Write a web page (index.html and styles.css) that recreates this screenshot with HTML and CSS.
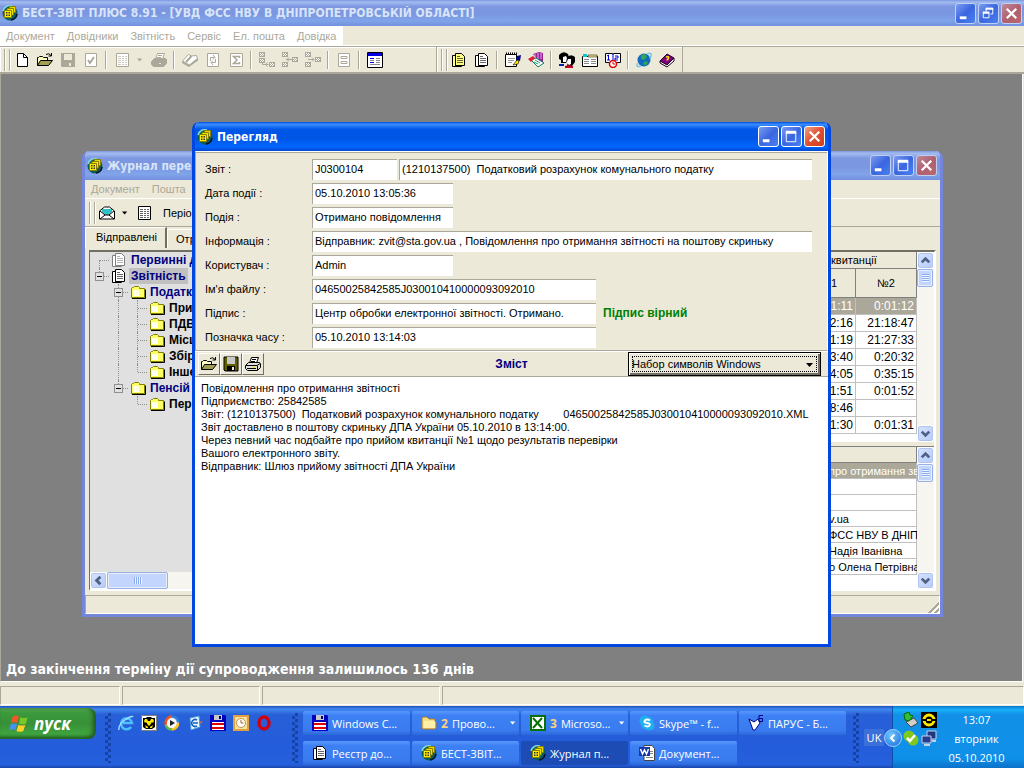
FILE: index.html
```html
<!DOCTYPE html>
<html lang="uk">
<head>
    <meta charset="UTF-8">
    <title>БЕСТ-ЗВІТ ПЛЮС 8.91</title>
    <link rel="stylesheet" href="styles.css">
</head>
<body>
<!-- icon set -->
<svg class="sprite" aria-hidden="true">
    <symbol id="app" viewBox="0 0 16 16">
        <circle cx="8" cy="8" r="7.5" fill="#0c5a5a"/>
        <path d="M1 6a7 7 0 0 1 9-5" fill="none" stroke="#7fd8d8" stroke-width="1.5"/>
        <path d="M7.500 1.500h6v6h-6z" fill="#e8d800" stroke="#8a8000"/>
        <path d="M5 3.500h6.500v6.500h-6.500z" fill="#f4e800" stroke="#8a8000"/>
        <path d="M2.500 5.500h7v7h-7z" fill="#ffee00" stroke="#8a8000"/>
        <path d="M4 7h1.500v1.500h-1.500zM6.500 7h1.500v1.500h-1.500zM4 9.500h1.500v1.500h-1.500zM6.500 9.500h1.500v1.500h-1.500z" fill="#333"/>
        <path d="M15 9a7 7 0 0 1-6 6" fill="none" stroke="#012" stroke-width="1.500"/>
    </symbol>
    <symbol id="new" viewBox="0 0 16 16">
        <path d="M3.500 1.500h6l4 4v9h-10z" fill="#fff" stroke="#000"/>
        <path d="M9.500 1.500v4h4" fill="none" stroke="#000"/>
    </symbol>
    <symbol id="open" viewBox="0 0 16 16">
        <path d="M.5 13.500v-8h1l1-1h3l1 1h4v3" fill="#ffffc0" stroke="#000"/>
        <path d="M.5 13.500l3-5h12l-4 5z" fill="#a0a050" stroke="#000"/>
        <path d="M9 2.500q3-2 5 1M14.500 1v3h-3" fill="none" stroke="#000"/>
    </symbol>
    <symbol id="save" viewBox="0 0 16 16">
        <path d="M1 1h14v14h-13l-1-1z" fill="#606000" stroke="#000"/>
        <path d="M4 1h8v7h-8z" fill="#c8c8c8"/>
        <path d="M4 10h8v5h-8z" fill="#000"/>
        <path d="M9 11h2v3h-2z" fill="#ece9d8"/>
    </symbol>
    <symbol id="save-off" viewBox="0 0 16 16">
        <path d="M1 1h14v14h-13l-1-1z" fill="#aca899"/>
        <path d="M4 2h8v6h-8zM9 11h2v3h-2z" fill="#ece9d8"/>
    </symbol>
    <symbol id="check" viewBox="0 0 16 16">
        <path d="M2.500 1.500h11v13h-11z" fill="#fff" stroke="#aca899"/>
        <path d="M5 8l2 3 4-6" fill="none" stroke="#aca899" stroke-width="2"/>
    </symbol>
    <symbol id="list" viewBox="0 0 16 16">
        <path d="M2.500 1.500h12v13h-12z" fill="#fff" stroke="currentColor"/>
        <path d="M4 4.500h3M8 4.500h2M11 4.500h2M4 6.500h3M8 6.500h2M11 6.500h2M4 8.500h3M8 8.500h2M11 8.500h2M4 10.500h3M8 10.500h2M11 10.500h2M4 12.500h3M8 12.500h2M11 12.500h2" stroke="currentColor" opacity=".6"/>
    </symbol>
    <symbol id="print" viewBox="0 0 16 16">
        <path d="M4.500 7l2-5.500h7l-2 5.500z" fill="#fff" stroke="currentColor"/>
        <path d="M7 3.500h4M6 5.500h4" stroke="currentColor"/>
        <path d="M.5 9.500l3-3h11l1 1v4l-3 3h-10l-2-2z" fill="var(--case)" stroke="currentColor"/>
        <path d="M1 9.500h11l3-2M12.500 10v4M2 12.500h9" fill="none" stroke="currentColor"/>
        <path d="M8 11h2v1h-2z" fill="var(--lamp)"/>
    </symbol>
    <symbol id="openbook" viewBox="0 0 16 16">
        <path d="M.5 9l6-6.500 3 1.500 5-.5 1 3-8 6.500z" fill="#fff" stroke="#aca899"/>
        <path d="M0 9l7 4 9-7v2.500l-9 6.500-7-4z" fill="#aca899"/>
        <path d="M9.500 4l-5.500 6" stroke="#aca899" stroke-width="2"/>
    </symbol>
    <symbol id="refresh" viewBox="0 0 16 16">
        <path d="M2.500 1.500h11v13h-11z" fill="#fff" stroke="#aca899"/>
        <path d="M5.500 9v-3.500h4M10.500 7v3.500h-4M8 3l2 2.500-2 2M8 8.500l-2 2 2 2.500" fill="none" stroke="#aca899"/>
    </symbol>
    <symbol id="sigma" viewBox="0 0 16 16">
        <path d="M2.500 1.500h12v13h-12z" fill="#fff" stroke="#aca899"/>
        <path d="M11.500 6v-1.500h-6l3.500 3.500-3.500 3.500h6v-1.500" fill="none" stroke="#aca899" stroke-width="1.500"/>
    </symbol>
    <symbol id="node-a" viewBox="0 0 16 16">
        <path d="M0 0h6v5h-6zM0 6h6v5h-6zM10 10h6v5h-6z" fill="#aca899"/>
        <path d="M1 1h1v1h-1zM3 1h1v1h-1zM2 2h1v1h-1zM4 2h1v1h-1zM1 3h1v1h-1zM3 3h1v1h-1zM1 7h1v1h-1zM3 7h1v1h-1zM2 8h1v1h-1zM4 8h1v1h-1zM1 9h1v1h-1zM3 9h1v1h-1zM11 11h1v1h-1zM13 11h1v1h-1zM12 12h1v1h-1zM14 12h1v1h-1zM11 13h1v1h-1zM13 13h1v1h-1z" fill="#fff"/>
        <path d="M3.500 11v1.500h6M8.500 10.500l-2 2 2 2" fill="none" stroke="#aca899"/>
    </symbol>
    <symbol id="node-b" viewBox="0 0 16 16">
        <path d="M0 0h6v5h-6zM0 10h6v5h-6zM10 5h6v5h-6z" fill="#aca899"/>
        <path d="M1 1h1v1h-1zM3 1h1v1h-1zM2 2h1v1h-1zM4 2h1v1h-1zM1 3h1v1h-1zM3 3h1v1h-1zM1 11h1v1h-1zM3 11h1v1h-1zM2 12h1v1h-1zM4 12h1v1h-1zM1 13h1v1h-1zM3 13h1v1h-1zM11 6h1v1h-1zM13 6h1v1h-1zM12 7h1v1h-1zM14 7h1v1h-1zM11 8h1v1h-1zM13 8h1v1h-1z" fill="#fff"/>
        <path d="M4 7.500h6M7 5.500l-2 2 2 2" fill="none" stroke="#aca899"/>
    </symbol>
    <symbol id="node-c" viewBox="0 0 16 16">
        <path d="M0 0h6v5h-6zM0 10h6v5h-6zM10 5h6v5h-6z" fill="#aca899"/>
        <path d="M1 1h1v1h-1zM3 1h1v1h-1zM2 2h1v1h-1zM4 2h1v1h-1zM1 3h1v1h-1zM3 3h1v1h-1zM1 11h1v1h-1zM3 11h1v1h-1zM2 12h1v1h-1zM4 12h1v1h-1zM1 13h1v1h-1zM3 13h1v1h-1zM11 6h1v1h-1zM13 6h1v1h-1zM12 7h1v1h-1zM14 7h1v1h-1zM11 8h1v1h-1zM13 8h1v1h-1z" fill="#fff"/>
        <path d="M3 7.500h6M7 5.500l2 2-2 2" fill="none" stroke="#aca899"/>
    </symbol>
    <symbol id="pane" viewBox="0 0 16 16">
        <path d="M2.500 1.500h11v13h-11z" fill="#fff" stroke="#aca899"/>
        <path d="M5 4.500h6v2h-6zM5 9.500h6v2h-6z" fill="#fff" stroke="#aca899"/>
    </symbol>
    <symbol id="form" viewBox="0 0 16 16">
        <path d="M.5.5h15v15h-15z" fill="#fff" stroke="#000"/>
        <path d="M1 1h14v3h-14z" fill="#0000e0"/>
        <path d="M3 6.500h4M3 10.500h4" stroke="#0000e0"/>
        <path d="M9 6.500h4M9 8.500h4M9 10.500h4M3 8.500h4M3 12.500h10" stroke="#888"/>
    </symbol>
    <symbol id="docs" viewBox="0 0 16 16">
        <path d="M1.500 3.500h3v10h6v1h-9z" fill="var(--body)" stroke="currentColor"/>
        <path d="M4.500 1.500h6l3 3v9h-9z" fill="var(--body)" stroke="currentColor"/>
        <path d="M6 4.500h3M6 6.500h6M6 8.500h6M6 10.500h6" stroke="currentColor" opacity=".6"/>
    </symbol>
    <symbol id="notepad" viewBox="0 0 16 16">
        <path d="M.5 2.500h11v12h-11z" fill="#fff" stroke="#000"/>
        <path d="M1 1.500h11" stroke="#000" stroke-width="2" stroke-dasharray="1 1"/>
        <path d="M3 6.500h7M3 8.500h6M3 10.500h4" stroke="#999"/>
        <path d="M12 4l4-1-1 6-4-1z" fill="#000080"/>
        <path d="M12 8l-4 5 5-1 1-3z" fill="#ffe800" stroke="#000" stroke-width=".6"/>
    </symbol>
    <symbol id="books" viewBox="0 0 16 16">
        <path d="M5 2l6-2 4 1v10l-7-5z" fill="#a02090"/>
        <path d="M7 2v4M10 1v6M13 1v6" stroke="#d8b0ff"/>
        <path d="M3 8l5-2 8 5-6 4z" fill="#fff" stroke="#088060"/>
        <path d="M0 7l5-3 2 2-4 4z" fill="#e02030"/>
        <path d="M6 10l4 2M7 8l5 3" stroke="#18a078"/>
    </symbol>
    <symbol id="people" viewBox="0 0 16 16">
        <path d="M0 3q4-5 9-1l1 3-3 6h-5v-3l-2-1z" fill="#000"/>
        <path d="M4 5l3-1 1 2-1 4h-3z" fill="#fff"/>
        <path d="M8 6q3-5 8-1v5l-3 4h-5l1-4z" fill="#000"/>
        <path d="M9 7h3v5l-2 1-2-2z" fill="#fff"/>
        <path d="M6 14l4-1 4 1v2h-8z" fill="#c00020"/>
        <path d="M0 12h5v2h-5z" fill="#0020b0"/>
    </symbol>
    <symbol id="cards" viewBox="0 0 16 16">
        <path d="M.5 4.500h15v10h-15z" fill="#fff" stroke="#000"/>
        <path d="M1 2h4v3h-4z" fill="#00c8d8"/>
        <path d="M6 3h9v2h-9z" fill="#f0e080" stroke="#000" stroke-width=".5"/>
        <path d="M2 7.500h5M2 9.500h5M2 11.500h5M9 7.500h5M9 9.500h5M9 11.500h5" stroke="#888"/>
    </symbol>
    <symbol id="diary" viewBox="0 0 16 16">
        <path d="M.5 1.500h7l.5 1 .5-1h7v9h-15z" fill="#fff" stroke="#000"/>
        <path d="M2 4l1.500-1v5M2 8h3M10 4h3v2h-3v2h3M8 2v7" fill="none" stroke="#0000e0"/>
        <circle cx="8" cy="12" r="3.500" fill="#fff" stroke="#e00000" stroke-width="1.500"/>
        <path d="M8 10v2h2" fill="none" stroke="#e00000"/>
    </symbol>
    <symbol id="globe" viewBox="0 0 16 16">
        <circle cx="8" cy="8" r="6.500" fill="#1468c0"/>
        <path d="M5 3l4-1 2 3-3 3-3-1zM9 9l3 1-2 4-3-2z" fill="#30a850"/>
        <path d="M2 11q-3 5 3 3M11 2q5-2 4 2l-1 3" fill="none" stroke="#70c8f0" stroke-width="1.500"/>
    </symbol>
    <symbol id="help" viewBox="0 0 16 16">
        <path d="M1 9l7-7 7 4-7 7z" fill="#800080" stroke="#200020"/>
        <path d="M1 9l7 4 7-7v3l-7 6-7-4z" fill="#fff" stroke="#200020"/>
        <path d="M7 5q3-1 2.500 1t-2 2" fill="none" stroke="#ffe800" stroke-width="1.500"/>
    </symbol>
    <symbol id="mail" viewBox="0 0 16 16">
        <path d="M.5 6l5-4h5l5 4v8h-15z" fill="#fff" stroke="#000"/>
        <path d="M3 4h10v3l-4 3h-2l-4-3z" fill="#30c0c8"/>
        <path d="M1 6l5 4-5 4M15 6l-5 4 5 4M6 10h4" fill="none" stroke="#000"/>
    </symbol>
    <symbol id="folder" viewBox="0 0 16 16">
        <path d="M1.500 13.500v-9l1-1h1l1-1h4l1 1v1h5v9z" fill="#ffff66" stroke="#808000"/>
        <path d="M3 6h6v6h-6z" fill="#fffff0"/>
        <path d="M2 14.500h13.500v-9" fill="none" stroke="#000"/>
    </symbol>
    <symbol id="folder-xp" viewBox="0 0 16 16">
        <path d="M1 13v-10l1-1h4l2 2h6v2l1 1v6l-1 1h-12z" fill="#f8e08a" stroke="#a8782a"/>
        <path d="M3 6h11v7h-11z" fill="#fff0a8"/>
    </symbol>
    <symbol id="floppy" viewBox="0 0 16 16">
        <path d="M0 0h15l1 1v15h-16z" fill="#0000c0"/>
        <path d="M4 0h8v5h-8z" fill="#c8c8c8"/><path d="M9 1h2v3h-2z" fill="#000080"/>
        <path d="M2 7h12v8h-12z" fill="#fff"/><path d="M2 8h12v2h-12zM2 12h12v2h-12z" fill="#e00000"/>
    </symbol>
    <symbol id="ie" viewBox="0 0 16 16">
        <path d="M13 12a5.500 5.500 0 1 1 1-4h-9" fill="none" stroke="#4cc0ff" stroke-width="2.500"/>
        <path d="M1 15q-1-5 6-10t8-3" fill="none" stroke="#9ce0ff" stroke-width="1.500"/>
    </symbol>
    <symbol id="bat" viewBox="0 0 16 16">
        <path d="M0 0h16v16h-16z" fill="#fff"/>
        <path d="M.5.5h15v15h-15z" fill="none" stroke="#000" stroke-dasharray="1 1"/>
        <path d="M2 3h3l1-1h4l1 1h3v9l-3 2h-6l-3-2z" fill="#000"/>
        <path d="M4 4h2l1 2h2l1-2h2l1 2-1 2-1-1-2 3-1 1-1-1-2-3-1 1-1-2zM4 10l3 2v1h-2zM12 10l-3 2v1h2z" fill="#ffe800"/>
    </symbol>
    <symbol id="player" viewBox="0 0 16 16">
        <circle cx="8" cy="8" r="7" fill="#f8f8f8"/>
        <path d="M2 10a6.500 6.500 0 0 1 6-8.500" fill="none" stroke="#f05020" stroke-width="2.500"/>
        <path d="M8 1.500a6.500 6.500 0 0 1 6 6" fill="none" stroke="#3080e0" stroke-width="2.500"/>
        <path d="M14 8a6.500 6.500 0 0 1-6 6.500" fill="none" stroke="#ffc020" stroke-width="2.500"/>
        <path d="M8 14.500a6.500 6.500 0 0 1-6-4" fill="none" stroke="#60b840" stroke-width="2.500"/>
        <path d="M6 5l5 3-5 3z" fill="#222"/>
    </symbol>
    <symbol id="outlook" viewBox="0 0 16 16">
        <path d="M3 3l9-2 1 11-9 3z" fill="#e8f4ff" stroke="#4898e0"/>
        <path d="M10 5a3.500 3.500 0 1 0 0 6M6 8h5" fill="none" stroke="#1060c0" stroke-width="1.500"/>
        <path d="M12 5l2 2 2-1-2 3z" fill="#e07020"/>
    </symbol>
    <symbol id="clock" viewBox="0 0 16 16">
        <path d="M1 1h14v14h-14z" fill="#f8e0a0" stroke="#e0a040" stroke-width="2"/>
        <circle cx="8" cy="8" r="4.500" fill="#fff" stroke="#c89040"/>
        <path d="M8 5v3h2.500" fill="none" stroke="#a86820"/>
    </symbol>
    <symbol id="opera" viewBox="0 0 16 16">
        <ellipse cx="8" cy="8" rx="5" ry="6" fill="none" stroke="#d00010" stroke-width="3.500"/>
    </symbol>
    <symbol id="excel" viewBox="0 0 16 16">
        <path d="M0 0h16v16h-16z" fill="#087008"/>
        <path d="M2 2h12v12h-12z" fill="#fff"/>
        <path d="M3 3l9 10M12 3l-9 10" stroke="#087008" stroke-width="2"/>
    </symbol>
    <symbol id="skype" viewBox="0 0 16 16">
        <circle cx="5.500" cy="5.500" r="5" fill="#20b0f0"/><circle cx="10.500" cy="10.500" r="5" fill="#20b0f0"/>
        <circle cx="8" cy="8" r="6.500" fill="#20b0f0"/>
        <path d="M11 5.500q-3-2-5 0t2 2.500 2.500 2.500-5 0" fill="none" stroke="#fff" stroke-width="2"/>
    </symbol>
    <symbol id="parus" viewBox="0 0 16 16">
        <path d="M1 4l5 3 4-3 2 4-5 7h-2z" fill="#fff" stroke="#000080"/>
        <path d="M15 .5h-4v6h3.500v-3h-3.500" fill="none" stroke="#000080"/>
    </symbol>
    <symbol id="word" viewBox="0 0 16 16">
        <path d="M5 .5h8l2.500 3v12h-10.500z" fill="#fff" stroke="#444"/>
        <path d="M10 6.500h4M10 8.500h4M7 12.500h7" stroke="#888"/>
        <path d="M0 2h11v9h-11z" fill="#1838a8"/>
        <path d="M1.500 4l2 5 2-4 2 4 2-5" fill="none" stroke="#fff" stroke-width="1.500"/>
    </symbol>
    <symbol id="usb" viewBox="0 0 16 16">
        <path d="M3 10l8-4 4 5-7 4z" fill="#d0d0c8" stroke="#444"/>
        <path d="M1 2l5-2 1 3 3 1-4 5-4-1z" fill="#30c030" stroke="#086808"/>
    </symbol>
    <symbol id="agent" viewBox="0 0 16 16">
        <path d="M0 0h16v16h-16z" fill="#000"/>
        <circle cx="8" cy="8" r="5" fill="none" stroke="#ffe800" stroke-width="3"/>
        <path d="M0 7h5l3-1 3 1h5v2h-5l-3 2-3-2h-5z" fill="#000"/><path d="M6 8h4" stroke="#ffe800" stroke-width="2"/>
    </symbol>
    <symbol id="online" viewBox="0 0 16 16">
        <circle cx="6" cy="6" r="5.500" fill="#80c820"/><circle cx="10" cy="10" r="5.500" fill="#80c820"/>
        <path d="M4 8l3 3 5-6" fill="none" stroke="#fff" stroke-width="2.500"/>
    </symbol>
    <symbol id="net" viewBox="0 0 16 16">
        <path d="M6 1h9v8h-9z" fill="#203880" stroke="#c8d0e8"/><path d="M1 6h9v7h-9z" fill="#283c90" stroke="#c8d0e8"/>
        <path d="M3 15h6M11 11h4" stroke="#c8d0e8" stroke-width="2"/>
    </symbol>
    <symbol id="flag" viewBox="0 0 16 16">
        <path d="M3 2q2-1.500 5 0l-1.500 5q-2.500-1-5 0z" fill="#f05828"/>
        <path d="M9 2.500q3 1.500 6 0l-1.500 5q-3 1.500-5.500 0z" fill="#78c828"/>
        <path d="M1.500 8q2.500-1 5 0l-1.500 5q-2-1.500-5 0z" fill="#4890f0"/>
        <path d="M7.500 8.500q3 1.500 5.500 0l-1.500 5q-3 1.500-5.500 0z" fill="#ffd028"/>
    </symbol>
    <symbol id="min" viewBox="0 0 20 20"><path d="M4 13h7v3h-7z" fill="#fff"/></symbol>
    <symbol id="max" viewBox="0 0 20 20">
        <path d="M4.500 5.500h10v10h-10z" fill="none" stroke="#fff"/><path d="M4 4h11v3h-11z" fill="#fff"/>
    </symbol>
    <symbol id="restore" viewBox="0 0 20 20">
        <path d="M7.500 8v-3.500h7v6h-2.500M4.500 9.500h6v5h-6z" fill="none" stroke="#fff"/><path d="M7 4h8v2h-8zM4 8h7v2h-7z" fill="#fff"/>
    </symbol>
    <symbol id="close" viewBox="0 0 20 20"><path d="M5 5l10 10M15 5l-10 10" stroke="#fff" stroke-width="2.500"/></symbol>
    <symbol id="up" viewBox="0 0 16 16"><path d="M4 10l4-4 4 4" fill="none" stroke="#4d6185" stroke-width="3"/></symbol>
    <symbol id="down" viewBox="0 0 16 16"><path d="M4 6l4 4 4-4" fill="none" stroke="#4d6185" stroke-width="3"/></symbol>
    <symbol id="left" viewBox="0 0 16 16"><path d="M10 4l-4 4 4 4" fill="none" stroke="#4d6185" stroke-width="3"/></symbol>
    <symbol id="tri" viewBox="0 0 8 8"><path d="M0 2h7l-3.500 4z" fill="currentColor"/></symbol>
</svg>

<header class="titlebar main-title">
    <svg class="icon"><use href="#app"/></svg>
    <h1>БЕСТ-ЗВІТ ПЛЮС 8.91 - [УВД ФСС НВУ В ДНІПРОПЕТРОВСЬКІЙ ОБЛАСТІ]</h1>
    <button class="cap" aria-label="Згорнути"><svg><use href="#min"/></svg></button>
    <button class="cap" aria-label="Відновити"><svg><use href="#restore"/></svg></button>
    <button class="cap cap-close" aria-label="Закрити"><svg><use href="#close"/></svg></button>
</header>
<nav class="menubar">
    <div class="menu">
        <button>Документ</button><button>Довідники</button><button>Звітність</button><button>Сервіс</button><button>Ел. пошта</button><button>Довідка</button>
    </div>
</nav>
<div class="toolbar">
    <div class="band band-main">
        <i class="grip"></i>
        <button class="tool"><svg class="icon"><use href="#new"/></svg></button>
        <button class="tool"><svg class="icon"><use href="#open"/></svg></button>
        <button class="tool off"><svg class="icon"><use href="#save-off"/></svg></button>
        <button class="tool off"><svg class="icon"><use href="#check"/></svg></button>
        <i class="sep"></i>
        <button class="tool off"><svg class="icon"><use href="#list"/></svg></button>
        <button class="drop off"><svg><use href="#tri"/></svg></button>
        <button class="tool off"><svg class="icon"><use href="#print"/></svg></button>
        <i class="sep"></i>
        <button class="tool off"><svg class="icon"><use href="#openbook"/></svg></button>
        <button class="tool off"><svg class="icon"><use href="#refresh"/></svg></button>
        <button class="tool off"><svg class="icon"><use href="#sigma"/></svg></button>
        <i class="sep"></i>
        <button class="tool off"><svg class="icon"><use href="#node-a"/></svg></button>
        <button class="tool off"><svg class="icon"><use href="#node-b"/></svg></button>
        <button class="tool off"><svg class="icon"><use href="#node-c"/></svg></button>
        <i class="sep"></i>
        <button class="tool off"><svg class="icon"><use href="#pane"/></svg></button>
        <i class="sep"></i>
        <button class="tool"><svg class="icon"><use href="#form"/></svg></button>
    </div>
    <div class="band">
        <i class="grip"></i>
        <button class="tool yellow"><svg class="icon"><use href="#docs"/></svg></button>
        <button class="tool"><svg class="icon"><use href="#docs"/></svg></button>
        <i class="sep"></i>
        <button class="tool"><svg class="icon"><use href="#notepad"/></svg></button>
        <button class="tool"><svg class="icon"><use href="#books"/></svg></button>
        <i class="sep"></i>
        <button class="tool"><svg class="icon"><use href="#people"/></svg></button>
        <button class="tool"><svg class="icon"><use href="#cards"/></svg></button>
        <button class="tool"><svg class="icon"><use href="#diary"/></svg></button>
        <i class="sep"></i>
        <button class="tool"><svg class="icon"><use href="#globe"/></svg></button>
        <button class="tool"><svg class="icon"><use href="#help"/></svg></button>
    </div>
</div>

<main class="desk">
    <p class="notice">До закінчення терміну дії супроводження залишилось 136 днів</p>

    <!-- journal window -->
    <section class="window journal">
        <header class="titlebar">
            <svg class="icon"><use href="#app"/></svg>
            <h2>Журнал пере</h2>
            <button class="cap" aria-label="Згорнути"><svg><use href="#min"/></svg></button>
            <button class="cap" aria-label="Розгорнути"><svg><use href="#max"/></svg></button>
            <button class="cap cap-close" aria-label="Закрити"><svg><use href="#close"/></svg></button>
        </header>
        <nav class="menu journal-menu"><button>Документ</button><button>Пошта</button></nav>
        <div class="journal-tools">
            <i class="grip"></i>
            <button class="tool"><svg class="icon"><use href="#mail"/></svg></button>
            <button class="drop"><svg><use href="#tri"/></svg></button>
            <button class="tool"><svg class="icon"><use href="#list"/></svg></button>
            <span class="period">Періо</span>
        </div>
        <div class="tabs">
            <button class="tab active">Відправлені</button><button class="tab">Отр</button>
        </div>
        <div class="journal-body">
            <div class="tree-pane">
                <ul class="tree">
                    <li><i class="ln first"></i><svg class="icon pale"><use href="#docs"/></svg><b class="navy">Первинні д</b></li>
                    <li><i class="ln last"><s></s></i><svg class="icon"><use href="#docs"/></svg><b class="navy picked">Звітність</b></li>
                    <li><i class="gap"></i><i class="ln"><s></s></i><svg class="icon"><use href="#folder"/></svg><b class="navy">Податк</b></li>
                    <li><i class="gap"></i><i class="bar"></i><i class="ln"></i><svg class="icon"><use href="#folder"/></svg><b>При</b></li>
                    <li><i class="gap"></i><i class="bar"></i><i class="ln"></i><svg class="icon"><use href="#folder"/></svg><b>ПДВ</b></li>
                    <li><i class="gap"></i><i class="bar"></i><i class="ln"></i><svg class="icon"><use href="#folder"/></svg><b>Місц</b></li>
                    <li><i class="gap"></i><i class="bar"></i><i class="ln"></i><svg class="icon"><use href="#folder"/></svg><b>Збір</b></li>
                    <li><i class="gap"></i><i class="bar"></i><i class="ln last"></i><svg class="icon"><use href="#folder"/></svg><b>Інше</b></li>
                    <li><i class="gap"></i><i class="ln last"><s></s></i><svg class="icon"><use href="#folder"/></svg><b class="navy">Пенсій</b></li>
                    <li><i class="gap"></i><i class="gap"></i><i class="ln last"></i><svg class="icon"><use href="#folder"/></svg><b>Пер</b></li>
                </ul>
                <div class="hscroll">
                    <button class="sb" aria-label="Ліворуч"><svg><use href="#left"/></svg></button>
                    <i class="thumb"></i>
                </div>
            </div>
            <div class="side">
                <div class="grid-pane">
                    <div class="grid-view">
                        <table class="receipts">
                            <colgroup><col class="first-col"><col></colgroup>
                            <thead>
                            <tr><th colspan="2">квитанції</th></tr>
                            <tr class="tall"><th>1</th><th>№2</th></tr>
                            </thead>
                            <tbody>
                            <tr class="cur"><td>1:11</td><td>0:01:12</td></tr>
                            <tr><td>2:16</td><td>21:18:47</td></tr>
                            <tr><td>1:19</td><td>21:27:33</td></tr>
                            <tr><td>3:40</td><td>0:20:32</td></tr>
                            <tr><td>4:05</td><td>0:35:15</td></tr>
                            <tr><td>1:51</td><td>0:01:52</td></tr>
                            <tr><td>8:46</td><td></td></tr>
                            <tr><td>1:30</td><td>0:01:31</td></tr>
                            </tbody>
                        </table>
                    </div>
                    <div class="vscroll">
                        <button class="sb" aria-label="Вгору"><svg><use href="#up"/></svg></button>
                        <i class="thumb"></i>
                        <button class="sb" aria-label="Вниз"><svg><use href="#down"/></svg></button>
                    </div>
                </div>
                <div class="grid-pane details-pane">
                    <div class="grid-view">
                        <table class="details">
                            <thead><tr><th></th></tr></thead>
                            <tbody>
                            <tr class="cur"><td>про отримання зв</td></tr>
                            <tr><td></td></tr>
                            <tr><td></td></tr>
                            <tr><td>v.ua</td></tr>
                            <tr><td>ФСС НВУ В ДНІП</td></tr>
                            <tr><td>Надія Іванівна</td></tr>
                            <tr><td>о Олена Петрівна</td></tr>
                            </tbody>
                        </table>
                    </div>
                    <div class="vscroll">
                        <button class="sb" aria-label="Вгору"><svg><use href="#up"/></svg></button>
                        <i class="thumb"></i>
                        <button class="sb" aria-label="Вниз"><svg><use href="#down"/></svg></button>
                    </div>
                </div>
            </div>
        </div>
        <footer class="journal-status"><i class="resize"></i></footer>
    </section>

    <!-- preview window -->
    <section class="window preview">
        <header class="titlebar">
            <svg class="icon"><use href="#app"/></svg>
            <h2>Перегляд</h2>
            <button class="cap" aria-label="Згорнути"><svg><use href="#min"/></svg></button>
            <button class="cap" aria-label="Розгорнути"><svg><use href="#max"/></svg></button>
            <button class="cap cap-close" aria-label="Закрити"><svg><use href="#close"/></svg></button>
        </header>
        <form class="fields">
            <div class="row">
                <label for="report">Звіт :</label>
                <input id="report" class="code" value="J0300104" readonly>
                <input class="wide" aria-label="Назва звіту" value="(1210137500)  Податковий розрахунок комунального податку" readonly>
            </div>
            <div class="row"><label for="date">Дата події :</label><input id="date" class="short" value="05.10.2010 13:05:36" readonly></div>
            <div class="row"><label for="event">Подія :</label><input id="event" class="short" value="Отримано повідомлення" readonly></div>
            <div class="row"><label for="info">Інформація :</label><input id="info" class="wide" value="Відправник: zvit@sta.gov.ua , Повідомлення про отримання звітності на поштову скриньку" readonly></div>
            <div class="row"><label for="user">Користувач :</label><input id="user" class="short" value="Admin" readonly></div>
            <div class="row"><label for="file">Ім'я файлу :</label><input id="file" class="medium" value="04650025842585J030010410000093092010" readonly></div>
            <div class="row"><label for="sign">Підпис :</label><input id="sign" class="medium" value="Центр обробки електронної звітності. Отримано." readonly><strong class="valid">Підпис вірний</strong></div>
            <div class="row"><label for="stamp">Позначка часу :</label><input id="stamp" class="medium" value="05.10.2010 13:14:03" readonly></div>
        </form>
        <div class="content-bar">
            <div class="content-tools">
                <button class="push"><svg class="icon"><use href="#open"/></svg></button>
                <button class="push"><svg class="icon"><use href="#save"/></svg></button>
                <button class="push"><svg class="icon"><use href="#print"/></svg></button>
            </div>
            <h3>Зміст</h3>
            <div class="charset">
                <select aria-label="Набор символів"><option>Набор символів Windows</option></select>
                <svg><use href="#tri"/></svg>
            </div>
        </div>
        <textarea class="memo" aria-label="Зміст" readonly>Повідомлення про отримання звітності
Підприємство: 25842585
Звіт: (1210137500)  Податковий розрахунок комунального податку        04650025842585J030010410000093092010.XML
Звіт доставлено в поштову скриньку ДПА України 05.10.2010 в 13:14:00.
Через певний час подбайте про прийом квитанції №1 щодо результатів перевірки
Вашого електронного звіту.
Відправник: Шлюз прийому звітності ДПА України</textarea>
    </section>
</main>

<footer class="statusbar"><i></i><i></i><i></i><i></i></footer>

<div class="taskbar">
    <button class="start"><svg><use href="#flag"/></svg>пуск</button>
    <i class="dots"></i>
    <div class="quick">
        <svg class="icon"><use href="#ie"/></svg>
        <svg class="icon"><use href="#bat"/></svg>
        <svg class="icon"><use href="#player"/></svg>
        <svg class="icon"><use href="#outlook"/></svg>
        <svg class="icon"><use href="#floppy"/></svg>
        <svg class="icon"><use href="#clock"/></svg>
        <svg class="icon"><use href="#opera"/></svg>
    </div>
    <i class="dots"></i>
    <div class="tasks">
        <button><svg class="icon"><use href="#floppy"/></svg>Windows C...</button>
        <button><svg class="icon"><use href="#folder-xp"/></svg><b>2</b> Прово...<svg class="more"><use href="#tri"/></svg></button>
        <button><svg class="icon"><use href="#excel"/></svg><b>3</b> Microso...<svg class="more"><use href="#tri"/></svg></button>
        <button><svg class="icon"><use href="#skype"/></svg>Skype™ - f...</button>
        <button><svg class="icon"><use href="#parus"/></svg>ПАРУС - Б...</button>
        <button><svg class="icon ink"><use href="#docs"/></svg>Реєстр до...</button>
        <button><svg class="icon"><use href="#app"/></svg>БЕСТ-ЗВІТ...</button>
        <button class="pressed"><svg class="icon"><use href="#app"/></svg>Журнал п...</button>
        <button><svg class="icon"><use href="#word"/></svg>Документ...</button>
    </div>
    <i class="dots"></i>
    <span class="lang">UK</span>
    <div class="tray">
        <button class="expand" aria-label="Показати приховані"><svg viewBox="0 0 16 16"><path d="M9.500 4.500l-3.500 3.500 3.500 3.500" fill="none" stroke="#fff" stroke-width="2"/></svg></button>
        <div class="tray-icons">
            <svg class="icon"><use href="#usb"/></svg><svg class="icon"><use href="#agent"/></svg>
            <svg class="icon"><use href="#online"/></svg><svg class="icon"><use href="#net"/></svg>
        </div>
        <div class="time"><span>13:07</span><span>вторник</span><span>05.10.2010</span></div>
    </div>
</div>
</body>
</html>
```
FILE: styles.css
```css
* {
    box-sizing: border-box;
}
body {
    --face: #ece9d8;
    --shadow: #aca899;
    --body: #fff;
    --case: #e0e0d8;
    --lamp: #e8e000;
    margin: 0;
    height: 100vh;
    display: flex;
    flex-direction: column;
    overflow: hidden;
    background: #ece9d8;
    color: #000;
    font: 11px "Liberation Sans", sans-serif;
}
button, input, select, textarea {
    font: inherit;
    color: inherit;
    margin: 0;
    padding: 0;
    border: 0;
    border-radius: 0;
    background: none;
    outline: 0;
}
h1, h2, h3, p, ul {
    margin: 0;
    padding: 0;
}
i, s {
    display: block;
    flex: none;
}
svg {
    display: block;
    flex: none;
}
.sprite {
    position: absolute;
    width: 0;
    height: 0;
}
.icon {
    width: 16px;
    height: 16px;
}
/* title bars */
.titlebar {
    display: flex;
    align-items: center;
    flex: none;
    height: 29px;
    gap: 2px;
    padding: 0 3px 0 2px;
    background: linear-gradient(#7a96df, #a3bcf0 8%, #7d97e0 25%, #7b97e1 55%, #80a4ea 80%, #7390dd);
    color: #d8e4f8;
}
.titlebar h1, .titlebar h2 {
    flex: 1;
    margin-left: 2px;
    font: bold 12px "DejaVu Sans Condensed", "DejaVu Sans", sans-serif;
    white-space: nowrap;
    overflow: hidden;
}
.main-title {
    height: 26px;
    padding-right: 2px;
}
.titlebar .cap {
    width: 21px;
    height: 21px;
    border: 1px solid #c0d0f4;
    border-radius: 3px;
    background: linear-gradient(135deg, #7c9cf0, #3a66e0 50%, #4a80f0);
}
.cap svg {
    width: 19px;
    height: 19px;
}
.titlebar .cap-close {
    background: linear-gradient(135deg, #c08898, #b06070 50%, #b86868);
}
/* menus and toolbars */
.menubar {
    flex: none;
    height: 20px;
    border-bottom: 1px solid #fff;
}
.menu {
    display: flex;
    width: max-content;
    height: 19px;
    background: #fff;
    color: var(--shadow);
}
.menu button {
    padding: 0 6px;
}
.toolbar {
    display: flex;
    flex: none;
    height: 28px;
    border-top: 1px solid var(--shadow);
    border-bottom: 2px solid var(--shadow);
}
.band {
    display: flex;
    align-items: center;
    padding: 1px 4px 0 4px;
    border-right: 1px solid var(--shadow);
    box-shadow: inset 1px 1px #fff;
}
.band-main {
    width: 437px;
}
.grip {
    width: 6px;
    height: 22px;
    border: solid var(--shadow);
    border-width: 0 1px;
    box-shadow: inset 1px 0 #fff, 1px 0 #fff;
}
.tool {
    display: flex;
    justify-content: center;
    width: 23px;
}
.off {
    --case: #aca899;
    --lamp: #ece9d8;
    color: #aca899;
}
.yellow {
    --body: #ffff80;
}
.drop {
    display: flex;
    justify-content: center;
    width: 14px;
}
.drop svg {
    width: 6px;
    height: 8px;
}
.sep {
    width: 2px;
    height: 18px;
    margin: 0 3px;
    background: linear-gradient(90deg, #aca899 50%, #fff 50%);
}
/* workspace */
.desk {
    position: relative;
    display: flex;
    align-items: flex-end;
    flex: 1;
    min-height: 0;
    margin-right: 1px;
    border-left: 1px solid var(--shadow);
    border-right: 1px solid #fff;
    border-bottom: 1px solid #fff;
    background: #808080;
}
.notice {
    padding: 0 0 4px 5px;
    color: #fff;
    font: bold 14px "DejaVu Sans Condensed", "DejaVu Sans", sans-serif;
}
.window {
    position: absolute;
    display: flex;
    flex-direction: column;
    border: solid #7386dc;
    border-width: 0 3px 3px;
    border-radius: 7px 7px 0 0;
    background: var(--face);
    overflow: hidden;
}
.journal {
    left: 81px;
    right: 79px;
    top: 77px;
    bottom: 64px;
}
.preview {
    left: 191px;
    right: 191px;
    top: 48px;
    bottom: 34px;
    border-color: #0046e0;
}
.preview .titlebar {
    background: linear-gradient(#0050d8, #3a8cff 8%, #0058e8 25%, #0055e5 55%, #0066ff 85%, #0048d0);
    color: #fff;
}
.preview .titlebar .cap {
    border-color: #fff;
}
.preview .titlebar .cap-close {
    background: linear-gradient(135deg, #f0a088, #e05030 50%, #d04020);
}
/* journal */
.journal-menu {
    width: auto;
    background: none;
    border-bottom: 1px solid #fff;
}
.journal-tools {
    display: flex;
    align-items: center;
    flex: none;
    height: 27px;
    padding-left: 4px;
}
.period {
    margin-left: 8px;
}
.tabs {
    display: flex;
    align-items: flex-end;
    flex: none;
    height: 22px;
    border-top: 1px solid var(--shadow);
}
.tab {
    height: 19px;
    padding: 0 8px;
    border-top: 1px solid #fff;
    border-left: 1px solid #fff;
}
.tab.active {
    height: 21px;
    padding: 0 8px 3px 10px;
    border-right: 2px solid #716f64;
}
.journal-body {
    display: flex;
    flex: 1;
    min-height: 0;
    margin: 2px 4px 2px 4px;
    border: 2px solid;
    border-color: #716f64 #fff #fff #716f64;
    border-left-width: 1px;
}
.tree-pane {
    display: flex;
    flex-direction: column;
    flex: 1;
    background: #e0e0e0;
}
.tree {
    flex: 1;
    list-style: none;
    font-size: 12px;
}
.tree li {
    display: flex;
    align-items: center;
    height: 16px;
}
.tree .icon {
    margin: 0 2px;
}
.tree b {
    padding: 0 2px;
    line-height: 16px;
}
.pale {
    color: #808080;
}
.ink {
    color: #000;
}
.navy {
    color: #000080;
}
.picked {
    background: #c0c0c0;
}
.gap, .bar, .ln {
    position: relative;
    width: 19px;
    height: 16px;
}
.bar::before, .ln::before {
    content: "";
    position: absolute;
    left: 9px;
    top: 0;
    height: 16px;
    border-left: 1px dotted #909090;
}
.ln::after {
    content: "";
    position: absolute;
    left: 10px;
    right: 0;
    top: 8px;
    border-top: 1px dotted #909090;
}
.first::before {
    top: 8px;
    height: 8px;
}
.last::before {
    height: 8px;
}
.ln s {
    position: absolute;
    z-index: 1;
    left: 5px;
    top: 4px;
    width: 9px;
    height: 9px;
    border: 1px solid #909090;
    background: linear-gradient(#000, #000) center / 5px 1px no-repeat #e0e0e0;
}
.hscroll {
    display: flex;
    height: 17px;
    background: #f6f5f0;
}
.sb {
    width: 17px;
    height: 17px;
    flex: none;
    border: 1px solid #fff;
    border-radius: 3px;
    background: linear-gradient(135deg, #d8e4fe, #b6caf8);
    box-shadow: inset 0 0 0 1px #b0c4f4;
}
.sb svg {
    width: 15px;
    height: 15px;
}
.thumb {
    border: 1px solid #98b0e8;
    border-radius: 2px;
    box-shadow: inset 0 0 0 1px #e8f0ff;
}
.hscroll .thumb {
    width: 61px;
    height: 17px;
    background: repeating-linear-gradient(90deg, #8caaf0 0 1px, #eef4fe 1px 2px) center / 8px 7px no-repeat #c4d5fd;
}
.vscroll .thumb {
    width: 16px;
    height: 18px;
    margin-bottom: auto;
    background: repeating-linear-gradient(#8caaf0 0 1px, #eef4fe 1px 2px) center / 7px 8px no-repeat #c4d5fd;
}
.side {
    display: flex;
    flex-direction: column;
    width: 107px;
    background: var(--face);
}
.grid-pane {
    display: flex;
    height: 190px;
    background: #fff;
}
.details-pane {
    flex: 1;
    height: auto;
    min-height: 0;
    margin-top: 4px;
    border-top: 1px solid #808080;
}
.grid-view {
    flex: 1;
    min-width: 0;
    overflow: hidden;
}
.vscroll {
    display: flex;
    flex-direction: column;
    width: 17px;
    background: #f6f5f0;
}
table {
    width: 100%;
    table-layout: fixed;
    border-collapse: separate;
    border-spacing: 0;
}
.first-col {
    width: 29px;
}
th {
    height: 17px;
    padding: 0;
    background: var(--face);
    border: solid #808080;
    border-width: 0 1px 1px 0;
    font-weight: normal;
}
td {
    height: 17px;
    padding: 0 2px;
    border: solid #c0c0c0;
    border-width: 0 1px 1px 0;
    text-align: right;
    white-space: nowrap;
}
.receipts th:first-child {
    padding-left: 4px;
    text-align: left;
}
.receipts td {
    font-size: 12px;
}
.tall th {
    height: 29px;
}
.details th, .details td {
    height: 16px;
    text-align: left;
}
.cur td {
    background: var(--shadow);
    color: #fff;
}
.journal-status {
    display: flex;
    justify-content: flex-end;
    align-items: flex-end;
    flex: none;
    height: 19px;
    margin-top: 2px;
    border: 1px solid;
    border-color: var(--shadow) #fff #fff var(--shadow);
}
.resize {
    width: 12px;
    height: 12px;
    background: repeating-linear-gradient(135deg, #fff 0 1px, #aca899 1px 3px, #ece9d8 3px 4px);
    clip-path: polygon(100% 0, 100% 100%, 0 100%);
}
/* preview */
.fields {
    flex: none;
    padding: 5px 8px 1px;
    border: 1px solid;
    border-color: #fff #fff var(--shadow) var(--shadow);
    box-shadow: inset 0 1px var(--shadow);
}
.row {
    display: flex;
    align-items: center;
    height: 24px;
}
.row label {
    flex: none;
    width: 108px;
    padding-left: 1px;
}
.row input {
    height: 21px;
    padding: 0 2px 1px;
    border: solid var(--shadow);
    border-width: 1px 0 0 1px;
    background: #fff;
}
.row .code {
    width: 85px;
    margin-right: 2px;
}
.row .short {
    width: 141px;
}
.row .medium {
    width: 284px;
}
.row .wide {
    flex: 1;
    margin-right: 7px;
}
.valid {
    margin-left: 7px;
    color: #008000;
    font-size: 12px;
}
.content-bar {
    display: grid;
    grid-template-columns: 1fr auto 1fr;
    align-items: center;
    flex: none;
    height: 26px;
    border-top: 1px solid #fff;
    border-bottom: 1px solid var(--shadow);
}
.content-tools {
    display: flex;
    padding-left: 3px;
}
.push {
    width: 22px;
    height: 22px;
    padding: 1px 2px;
    border: 1px solid;
    border-color: #fff #716f64 #716f64 #fff;
}
.content-bar h3 {
    color: #000080;
    font-size: 12px;
}
.charset {
    position: relative;
    justify-self: end;
    width: 193px;
    margin-right: 7px;
}
.charset select {
    appearance: none;
    width: 100%;
    height: 24px;
    padding-left: 3px;
    border: 1px solid #000;
    box-shadow: inset 1px 1px #fff, inset -2px -2px #716f64;
    outline: 1px dotted #000;
    outline-offset: -5px;
}
.charset svg {
    position: absolute;
    right: 7px;
    top: 9px;
    width: 8px;
    height: 8px;
}
.memo {
    flex: 1;
    min-height: 0;
    padding: 5px 6px;
    background: #fff;
    line-height: 13px;
    resize: none;
    white-space: pre-wrap;
}
/* status bar */
.statusbar {
    display: flex;
    flex: none;
    gap: 2px;
    height: 24px;
    padding: 4px 0 1px;
}
.statusbar i {
    width: 178px;
    border: 1px solid;
    border-color: var(--shadow) #fff #fff var(--shadow);
}
.statusbar i:first-child {
    width: 120px;
}
.statusbar i:nth-child(2) {
    width: 138px;
}
.statusbar i:last-child {
    flex: 1;
}
/* taskbar */
.taskbar {
    display: flex;
    flex: none;
    height: 62px;
    background: linear-gradient(#1f50c0, #4088f0 5%, #2860d8 14%, #245cdb 60%, #2560dc 95%, #1a44a8);
    color: #fff;
    font-family: "Open Sans", sans-serif;
}
.start {
    display: flex;
    align-items: center;
    width: 96px;
    height: 31px;
    margin-top: 2px;
    padding-left: 9px;
    gap: 5px;
    border-radius: 0 8px 8px 0;
    background: linear-gradient(#5aa85a, #3c9a3c 15%, #389038 50%, #3fa53f 85%, #2a702a);
    box-shadow: inset -3px -1px 4px #205820;
    font: italic bold 17px "Open Sans", sans-serif;
}
.start svg {
    width: 20px;
    height: 20px;
}
.dots {
    width: 6px;
    margin: 7px 0 5px 9px;
    background: linear-gradient(#103890, #103890) 0 0 / 6px 6px, none;
    background: conic-gradient(#103890 25%, transparent 0 50%, #103890 0 75%, transparent 0) 0 0 / 6px 6px;
    opacity: .7;
}
.quick {
    display: flex;
    gap: 7px;
    padding: 9px 11px 0 7px;
}
.tasks {
    display: grid;
    grid-template-columns: repeat(5, minmax(0, 1fr));
    grid-auto-rows: 24px;
    gap: 6px 2px;
    flex: 1;
    padding: 5px 0 0 5px;
}
.tasks button {
    display: flex;
    align-items: center;
    gap: 4px;
    padding-left: 9px;
    border-radius: 2px;
    background: linear-gradient(#5a98ff, #3c80f4 20%, #3a7cf0 80%, #2c68d8);
    white-space: nowrap;
    text-align: left;
}
.tasks .pressed {
    background: #1c4cb4;
}
.tasks b {
    color: #ffd27a;
    font-size: 12px;
}
.tasks .more {
    width: 6px;
    height: 8px;
    margin: 0 3px 0 auto;
}
.tasks + .dots {
    margin-left: 7px;
}
.lang {
    align-self: center;
    width: 20px;
    margin: 0 8px 0 5px;
    padding: 1px 0;
    background: #3a70d8;
    text-align: center;
}
.tray {
    position: relative;
    display: flex;
    width: 132px;
    background: linear-gradient(#0c7ad0, #18b0f8 6%, #1290e8 14%, #0f90e8 85%, #0c70c8);
    border-left: 1px solid #0c50a8;
}
.expand {
    position: absolute;
    left: -9px;
    top: 23px;
    width: 18px;
    height: 18px;
    border-radius: 9px;
    background: radial-gradient(circle at 6px 5px, #70c8ff, #1868d8);
    border: 1px solid #a0d0ff;
}
.tray-icons {
    display: grid;
    grid-template-columns: 16px 16px;
    gap: 2px;
    align-content: start;
    padding: 6px 0 0 10px;
}
.time {
    display: flex;
    flex-direction: column;
    flex: 1;
    align-items: center;
    padding: 4px 8px 0 0;
    line-height: 19px;
}
```
